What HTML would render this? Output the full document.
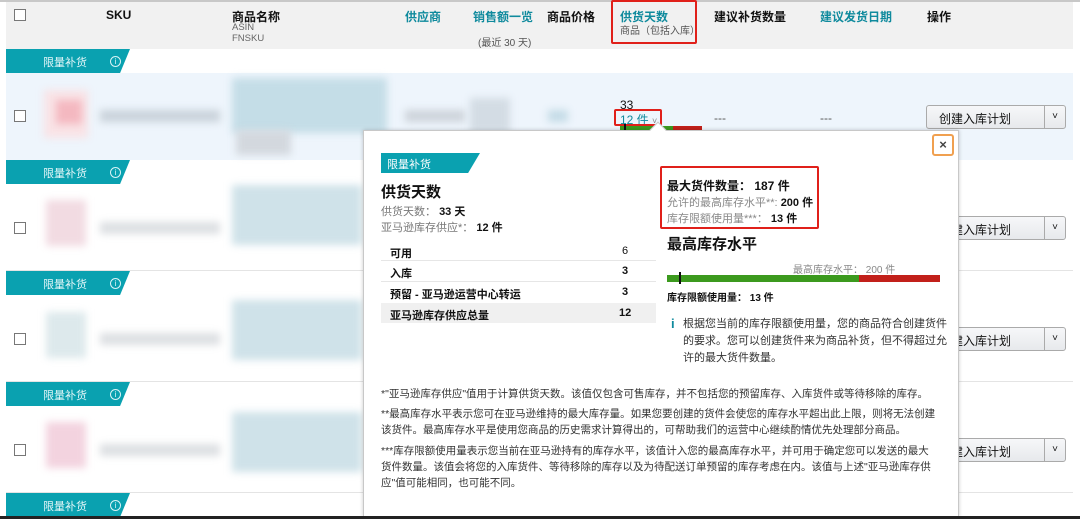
<!DOCTYPE html>
<html><head><meta charset="utf-8"><style>
*{margin:0;padding:0;box-sizing:border-box}
body{width:1080px;height:519px;overflow:hidden;background:#fff;font-family:"Liberation Sans","Noto Sans CJK SC",sans-serif;color:#111;position:relative;font-size:12px}
.a{position:absolute;white-space:nowrap}
.teal{color:#0f8a9d}
.b{font-weight:bold}
.ban{position:absolute;left:6px;width:124px;height:24px;background:#0aa1b0;clip-path:polygon(0 0,100% 0,92% 100%,0 100%);color:#e6f7f9;font-size:11px}
.ban span{position:absolute;left:37px;top:5px}
.ban i{position:absolute;left:104px;top:7px;width:11px;height:11px;border:1px solid #d8f3f6;border-radius:50%;font-style:normal;font-size:8px;text-align:center;line-height:9px}
.cb{position:absolute;left:14px;width:12px;height:12px;border:1px solid #777;background:#fff}
.blur{position:absolute;filter:blur(4px)}
.btn{position:absolute;left:926px;width:140px;height:24px;border:1px solid #aaa;border-radius:3px;background:linear-gradient(#f6f7f9,#e7e9ec);font-size:12px}
.btn span{position:absolute;left:12px;top:4px}
.btn em{position:absolute;right:0;top:0;width:21px;height:22px;border-left:1px solid #aaa;font-style:normal;text-align:center;line-height:22px;font-size:10px}
.rowline{position:absolute;left:6px;width:1067px;height:1px;background:#e4e4e4}
.red{position:absolute;border:2px solid #e0201a;border-radius:2px}
</style></head><body>
<div class="a" style="left:0;top:0;width:1080px;height:2px;background:#c8c8c8"></div>
<div class="a" style="left:6px;top:2px;width:1067px;height:47px;background:#f1f1f1"></div>
<div class="cb" style="top:9px"></div>
<div class="a b" style="left:106px;top:8px">SKU</div>
<div class="a b" style="left:232px;top:8px">商品名称</div>
<div class="a" style="left:232px;top:22px;font-size:9.5px;color:#666;line-height:11px">ASIN<br>FNSKU</div>
<div class="a b teal" style="left:405px;top:8px">供应商</div>
<div class="a b teal" style="left:473px;top:8px">销售额一览</div>
<div class="a" style="left:478px;top:34px;font-size:10px;color:#555">(最近 30 天)</div>
<div class="a b" style="left:547px;top:8px">商品价格</div>
<div class="a b teal" style="left:620px;top:8px">供货天数</div>
<div class="a" style="left:620px;top:22px;font-size:10px;color:#555">商品（包括入库）</div>
<div class="red" style="left:611px;top:0;width:86px;height:44px"></div>
<div class="a b" style="left:714px;top:8px">建议补货数量</div>
<div class="a b teal" style="left:820px;top:8px">建议发货日期</div>
<div class="a b" style="left:927px;top:8px">操作</div>

<div class="a" style="left:6px;top:73px;width:1067px;height:87px;background:#eef5fc"></div>
<div class="ban" style="top:49px"><span>限量补货</span><i>i</i></div>
<div class="ban" style="top:160px"><span>限量补货</span><i>i</i></div>
<div class="ban" style="top:271px"><span>限量补货</span><i>i</i></div>
<div class="ban" style="top:382px"><span>限量补货</span><i>i</i></div>
<div class="ban" style="top:493px"><span>限量补货</span><i>i</i></div>
<div class="rowline" style="top:270px"></div><div class="rowline" style="top:381px"></div><div class="rowline" style="top:492px"></div>

<div class="cb" style="top:110px"></div>
<div class="blur" style="left:44px;top:90px;width:44px;height:48px;background:#f9e3e6"></div>
<div class="blur" style="left:56px;top:100px;width:26px;height:24px;background:#f4b8c0"></div>
<div class="blur" style="left:100px;top:110px;width:120px;height:12px;background:#c9d2da"></div>
<div class="blur" style="left:232px;top:78px;width:155px;height:55px;background:#c4dde7"></div>
<div class="blur" style="left:236px;top:130px;width:55px;height:25px;background:#d3d8de"></div>
<div class="blur" style="left:405px;top:110px;width:60px;height:12px;background:#cdd3da"></div>
<div class="blur" style="left:470px;top:98px;width:40px;height:35px;background:#d3dce4"></div>
<div class="blur" style="left:548px;top:110px;width:20px;height:12px;background:#c4dbe6"></div>
<div class="a" style="left:620px;top:98px">33</div>
<div class="a teal" style="left:620px;top:111px">12 件 <span style="font-size:9px;color:#888">˅</span></div>
<div class="red" style="left:614px;top:109px;width:48px;height:17px"></div>
<div class="a" style="left:620px;top:126px;width:53px;height:5px;background:#3c9a1e"></div>
<div class="a" style="left:673px;top:126px;width:29px;height:5px;background:#c2201a"></div>
<div class="a" style="left:624px;top:124px;width:2px;height:8px;background:#111"></div>
<div class="a" style="left:714px;top:111px;color:#555">---</div>
<div class="a" style="left:820px;top:111px;color:#555">---</div>
<div class="btn" style="top:105px"><span>创建入库计划</span><em>˅</em></div>

<div class="cb" style="top:222px"></div><div class="cb" style="top:333px"></div><div class="cb" style="top:444px"></div>
<div class="blur" style="left:46px;top:200px;width:40px;height:46px;background:#f2dbe2"></div>
<div class="blur" style="left:100px;top:222px;width:120px;height:12px;background:#dcdfe2"></div>
<div class="blur" style="left:232px;top:185px;width:130px;height:60px;background:#cfe2e9"></div>
<div class="blur" style="left:46px;top:312px;width:40px;height:46px;background:#dde9ec"></div>
<div class="blur" style="left:100px;top:333px;width:120px;height:12px;background:#dcdfe2"></div>
<div class="blur" style="left:232px;top:300px;width:130px;height:60px;background:#cfe2e9"></div>
<div class="blur" style="left:46px;top:422px;width:40px;height:46px;background:#f3d3df"></div>
<div class="blur" style="left:100px;top:444px;width:120px;height:12px;background:#dcdfe2"></div>
<div class="blur" style="left:232px;top:412px;width:130px;height:60px;background:#cfe2e9"></div>
<div class="btn" style="top:216px"><span>创建入库计划</span><em>˅</em></div>
<div class="btn" style="top:327px"><span>创建入库计划</span><em>˅</em></div>
<div class="btn" style="top:438px"><span>创建入库计划</span><em>˅</em></div>

<div class="a" style="left:363px;top:130px;width:596px;height:387px;background:#fff;border:1px solid #c8c8c8;box-shadow:0 0 4px rgba(0,0,0,.2)"></div>
<div class="a" style="left:652px;top:124px;width:12px;height:12px;background:#fff;transform:rotate(45deg);border-left:1px solid #c8c8c8;border-top:1px solid #c8c8c8"></div>
<div class="a" style="left:932px;top:134px;width:22px;height:22px;border:2px solid #f0a050;border-radius:3px;text-align:center;line-height:17px;font-size:13px;font-weight:bold;color:#444">×</div>
<div class="a" style="left:381px;top:153px;width:99px;height:20px;background:#0aa1b0;clip-path:polygon(0 0,100% 0,88% 100%,0 100%);color:#fff;font-size:11px;padding:3px 0 0 6px">限量补货</div>
<div class="a b" style="left:381px;top:181px;font-size:15px">供货天数</div>
<div class="a" style="left:381px;top:203px;font-size:11px;color:#777">供货天数： <b style="color:#111">33 天</b></div>
<div class="a" style="left:381px;top:219px;font-size:11px;color:#777">亚马逊库存供应*： <b style="color:#111">12 件</b></div>
<div class="a" style="left:381px;top:241px;width:275px;font-size:11px">
 <div style="height:20px;border-bottom:1px solid #e6e6e6;position:relative"><b style="position:absolute;left:9px;top:4px">可用</b><span style="position:absolute;left:241px;top:4px">6</span></div>
 <div style="height:21px;border-bottom:1px solid #e6e6e6;position:relative"><b style="position:absolute;left:9px;top:4px">入库</b><b style="position:absolute;left:241px;top:4px">3</b></div>
 <div style="height:21px;position:relative"><b style="position:absolute;left:9px;top:4px">预留 - 亚马逊运营中心转运</b><b style="position:absolute;left:241px;top:4px">3</b></div>
 <div style="height:20px;background:#f0f0f0;position:relative"><b style="position:absolute;left:9px;top:4px">亚马逊库存供应总量</b><b style="position:absolute;left:238px;top:4px">12</b></div>
</div>
<div class="red" style="left:660px;top:166px;width:159px;height:63px"></div>
<div class="a b" style="left:667px;top:177px;font-size:12px">最大货件数量： 187 件</div>
<div class="a" style="left:667px;top:194px;font-size:11px;color:#888">允许的最高库存水平**: <b style="color:#111">200 件</b></div>
<div class="a" style="left:667px;top:210px;font-size:11px;color:#888">库存限额使用量***： <b style="color:#111">13 件</b></div>
<div class="a b" style="left:667px;top:233px;font-size:15px">最高库存水平</div>
<div class="a" style="left:793px;top:261px;font-size:10px;color:#888">最高库存水平： 200 件</div>
<div class="a" style="left:667px;top:275px;width:192px;height:7px;background:#3c9a1e"></div>
<div class="a" style="left:859px;top:275px;width:81px;height:7px;background:#c2201a"></div>
<div class="a" style="left:679px;top:272px;width:2px;height:12px;background:#111"></div>
<div class="a b" style="left:667px;top:289px;font-size:10px">库存限额使用量： 13 件</div>
<div class="a teal b" style="left:671px;top:316px;font-size:13px">i</div>
<div class="a" style="left:683px;top:316px;font-size:11px;line-height:17px;color:#333">根据您当前的库存限额使用量，您的商品符合创建货件<br>的要求。您可以创建货件来为商品补货，但不得超过允<br>许的最大货件数量。</div>
<div class="a" style="left:381px;top:386px;font-size:10.5px;line-height:16px;color:#333">*"亚马逊库存供应"值用于计算供货天数。该值仅包含可售库存，并不包括您的预留库存、入库货件或等待移除的库存。</div>
<div class="a" style="left:381px;top:406px;font-size:10.5px;line-height:16px;color:#333">**最高库存水平表示您可在亚马逊维持的最大库存量。如果您要创建的货件会使您的库存水平超出此上限，则将无法创建<br>该货件。最高库存水平是使用您商品的历史需求计算得出的，可帮助我们的运营中心继续酌情优先处理部分商品。</div>
<div class="a" style="left:381px;top:443px;font-size:10.5px;line-height:16px;color:#333">***库存限额使用量表示您当前在亚马逊持有的库存水平，该值计入您的最高库存水平，并可用于确定您可以发送的最大<br>货件数量。该值会将您的入库货件、等待移除的库存以及为待配送订单预留的库存考虑在内。该值与上述"亚马逊库存供<br>应"值可能相同，也可能不同。</div>
<div class="a" style="left:0;top:516px;width:1080px;height:3px;background:#222"></div>
</body></html>
